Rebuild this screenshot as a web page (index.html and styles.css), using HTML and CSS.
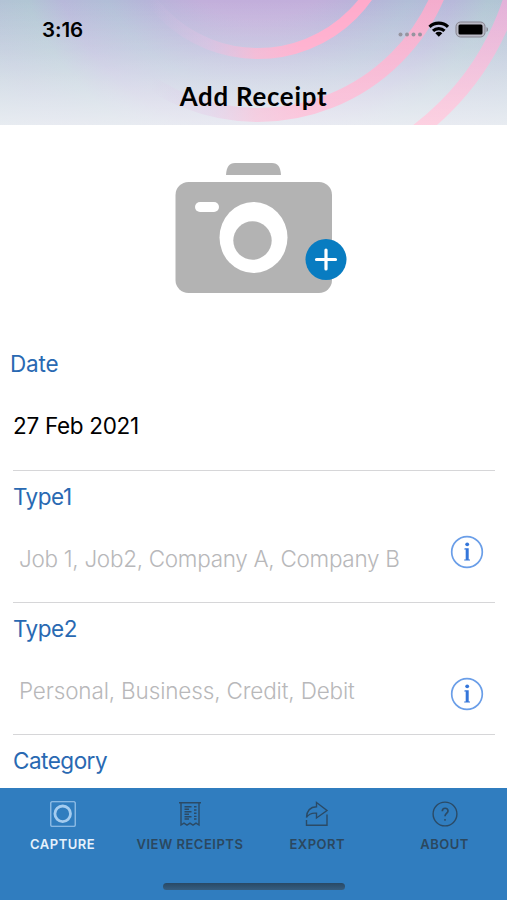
FILE: index.html
```html
<!DOCTYPE html>
<html lang="en">

<head>
    <meta charset="UTF-8">
    <meta name="viewport" content="width=device-width, initial-scale=1.0">
    <title>Add Receipt</title>
    <link rel="stylesheet" href="styles.css">
</head>

<body>
    <div class="header">
        <svg class="rings" width="507" height="125" viewBox="0 0 507 125">
            <defs>
                <linearGradient id="pink" gradientUnits="userSpaceOnUse" x1="150" y1="0" x2="300" y2="0">
                    <stop offset="0" stop-color="#d0bbe2" stop-opacity="0" />
                    <stop offset="0.4" stop-color="#dcbce0" stop-opacity="0.6" />
                    <stop offset="0.7" stop-color="#f6b2d0" stop-opacity="0.9" />
                    <stop offset="1" stop-color="#ffaacb" />
                </linearGradient>
                <linearGradient id="pink3" gradientUnits="userSpaceOnUse" x1="0" y1="0" x2="0" y2="125">
                    <stop offset="0" stop-color="#e8b0da" />
                    <stop offset="1" stop-color="#ffb9d2" />
                </linearGradient>
                <radialGradient id="glow" gradientUnits="userSpaceOnUse" cx="258" cy="-80" r="330">
                    <stop offset="0" stop-color="#c2aadc" />
                    <stop offset="0.3" stop-color="#c2afdb" />
                    <stop offset="0.42" stop-color="#b6b5d9" />
                    <stop offset="0.52" stop-color="#b1bed7" />
                    <stop offset="0.64" stop-color="#b7b8da" />
                    <stop offset="0.74" stop-color="#b1c6d4" />
                    <stop offset="0.86" stop-color="#b3c1d6" />
                    <stop offset="1" stop-color="#b0c8d3" />
                </radialGradient>
                <linearGradient id="fade" x1="0" y1="0" x2="0" y2="1">
                    <stop offset="0" stop-color="#e9ebf1" stop-opacity="0" />
                    <stop offset="0.4" stop-color="#e9ebf1" stop-opacity="0.25" />
                    <stop offset="1" stop-color="#e9ebf1" stop-opacity="0.8" />
                </linearGradient>
                <linearGradient id="fadeRings" x1="0" y1="0" x2="0" y2="1">
                    <stop offset="0" stop-color="#fff" stop-opacity="0" />
                    <stop offset="1" stop-color="#fff" stop-opacity="0.3" />
                </linearGradient>
            </defs>
            <rect width="507" height="125" fill="url(#glow)" />
            <rect width="507" height="125" fill="url(#fade)" />
            <g fill="none">
                <circle cx="258" cy="-80.5" r="134" stroke="url(#pink)" stroke-width="11" />
                <circle cx="258" cy="-80.5" r="195.500" stroke="url(#pink)" stroke-width="14" opacity="0.85" />
                <circle cx="258" cy="-80.5" r="265" stroke="url(#pink3)" stroke-width="15" opacity="0.9" class="outer" />
            </g>
            <rect width="507" height="125" fill="url(#fadeRings)" />
        </svg>
        <div class="status">
            <span class="time">3:16</span>
            <svg class="signal" width="92" height="20" viewBox="0 0 92 20">
                <g fill="#96949f">
                    <circle cx="2.500" cy="14.500" r="2" />
                    <circle cx="9" cy="14.500" r="2" />
                    <circle cx="15.500" cy="14.500" r="2" />
                    <circle cx="22" cy="14.500" r="2" />
                </g>
                <g fill="none" stroke="#000" stroke-width="3.200">
                    <path d="M31.500 6.800a13.500 13.500 0 0 1 18.500 0" />
                    <path d="M35 10.900a8.500 8.500 0 0 1 11.500 0" />
                </g>
                <path d="M37.300 13.200a5 5 0 0 1 7 0L40.800 16.700z" />
                <rect x="58" y="2" width="29" height="15" rx="4.500" fill="#b9b9c5" stroke="#85838f" stroke-width="1" />
                <rect x="60.500" y="4.500" width="24" height="10" rx="1.500" />
                <path d="M88.500 7v5c2-.8 2-4.200 0-5z" fill="#85838f" />
            </svg>
        </div>
        <h1>Add Receipt</h1>
    </div>

    <div class="content">
        <div class="photo">
            <svg width="174" height="132" viewBox="0 0 174 132">
                <path d="M51 12c.5-8 3-12 9-12h37c6 0 8.500 4 9 12z" fill="#b3b3b3" />
                <rect x="0.500" y="19" width="156.500" height="111" rx="13" fill="#b3b3b3" />
                <rect x="20" y="39" width="24" height="10" rx="5" fill="#fff" />
                <ellipse cx="78.500" cy="74.500" rx="34" ry="35.500" fill="#fff" />
                <circle cx="77.500" cy="77.500" r="19.200" fill="#b3b3b3" />
                <circle cx="151" cy="96.500" r="20.500" fill="#087cc1" />
                <path d="M151 87v19M141.500 96.500h19" stroke="#fff" stroke-width="3.200" stroke-linecap="round" />
            </svg>
        </div>
        <div class="field date">
            <label>Date</label>
            <div class="row">
                <span class="value">27 Feb 2021</span>
            </div>
        </div>
        <div class="field">
            <label>Type1</label>
            <div class="row">
                <span class="hint">Job 1, Job2, Company A, Company B</span>
                <svg class="info" width="34" height="34" viewBox="0 0 34 34">
                    <circle cx="17" cy="17" r="15.300" />
                    <path d="M14.700 13.200h4v11.200h1.300v1.200h-5.800v-1.200h1.500v-9.800h-1.500z" />
                    <circle class="dot" cx="17.200" cy="9.300" r="1.900" />
                </svg>
            </div>
        </div>
        <div class="field">
            <label>Type2</label>
            <div class="row low">
                <span class="hint personal">Personal, Business, Credit, Debit</span>
                <svg class="info" width="34" height="34" viewBox="0 0 34 34">
                    <circle cx="17" cy="17" r="15.300" />
                    <path d="M14.700 13.200h4v11.200h1.300v1.200h-5.800v-1.200h1.500v-9.800h-1.500z" />
                    <circle class="dot" cx="17.200" cy="9.300" r="1.900" />
                </svg>
            </div>
        </div>
        <div class="field last">
            <label>Category</label>
        </div>
    </div>

    <div class="nav">
        <ul class="tabs">
            <li class="active">
                <svg width="26" height="26" viewBox="0 0 26 26">
                    <rect x="0.800" y="0.800" width="24.400" height="24.400" rx="1" stroke-width="1.100" />
                    <circle cx="12.700" cy="12.800" r="7.800" stroke-width="2.800" />
                </svg>
                <span>CAPTURE</span>
            </li>
            <li>
                <svg width="26" height="26" viewBox="0 0 26 26">
                    <path d="M2 1.800h22M4 2v22l3-1.800 3 2 3-2 3 2 3-2 3 1.800V2" />
                    <path d="M7.500 5.800h7M7.500 8.300h4.500M7.500 10.800h7M7.500 13.300h4.500M7.500 15.800h7M7.500 18h4.500M17 5.800h2.500M17 9h2.500M17 12.200h2.500M17 15.400h2.500M17 18h2.500" />
                </svg>
                <span>VIEW RECEIPTS</span>
            </li>
            <li>
                <svg width="26" height="26" viewBox="0 0 26 26">
                    <path d="M12.500 1.500l10.500 8-10.500 7.500v-4.800C7 11.700 4 14 2.500 16.500 2.800 10 6.500 6 12.500 5.800z" />
                    <path d="M2.500 19v5.300H23V13.500" />
                </svg>
                <span>EXPORT</span>
            </li>
            <li>
                <svg width="26" height="26" viewBox="0 0 26 26">
                    <circle cx="13" cy="13" r="11.900" />
                    <path d="M10.300 10.300c0-4 5.700-4 5.700-.3 0 2.400-3 2.600-3 5.200" stroke-width="1.700" />
                    <path d="M13 18v1.700" stroke-width="1.500" />
                </svg>
                <span>ABOUT</span>
            </li>
        </ul>
        <div class="home"></div>
    </div>
</body>

</html>
```
FILE: styles.css
```css
* {
    margin: 0;
    padding: 0;
    box-sizing: border-box;
    list-style: none;
}

body {
    width: 507px;
    height: 900px;
    display: flex;
    flex-direction: column;
    overflow: hidden;
    background: #fff;
    font-family: Inter, "Liberation Sans", sans-serif;
}

svg {
    display: block;
    flex-shrink: 0;
}

.header {
    height: 125px;
    position: relative;
    flex-shrink: 0;
}

/* sits behind the status bar and title */
.rings {
    position: absolute;
    z-index: -1;
}

.outer {
    clip-path: inset(0 0 0 50%);
}

.status {
    display: flex;
    justify-content: space-between;
    padding: 20px 17px 0 42px;
    height: 80px;
}

.time {
    font-size: 20.5px;
    line-height: 20px;
    font-weight: 600;
    letter-spacing: -0.1px;
}

h1 {
    font-family: Lato, sans-serif;
    font-size: 25.8px;
    line-height: 32px;
    font-weight: 700;
    letter-spacing: 0.75px;
    text-align: center;
}

.content {
    height: 663px;
    display: flex;
    flex-direction: column;
    overflow: hidden;
    flex-shrink: 0;
}

.photo {
    height: 213px;
    padding: 38px 0 0 175px;
    flex-shrink: 0;
}

.field {
    height: 132px;
    margin: 0 12px 0 13px;
    border-bottom: 1px solid #d6d6d8;
    flex-shrink: 0;
    white-space: nowrap;
}

.field.date {
    height: 133px;
}

.field.last {
    border: 0;
}

label {
    display: block;
    padding-top: 10px;
    font-size: 22.5px;
    line-height: 31px;
    color: #2969b2;
    letter-spacing: -0.5px;
}

.date label {
    margin-left: -3px;
    padding-top: 11px;
    line-height: 30px;
    letter-spacing: -0.2px;
}

.row {
    display: flex;
    justify-content: space-between;
    padding: 23px 11px 0 0;
}

.date .row {
    padding-top: 24px;
}

.value {
    padding-top: 8px;
    font-size: 22.5px;
    line-height: 30px;
    letter-spacing: -0.3px;
}

.hint {
    padding: 8px 0 0 6px;
    font-size: 22.5px;
    line-height: 31px;
    font-weight: 300;
    letter-spacing: -0.3px;
    color: #b8b8ba;
}

.personal {
    letter-spacing: -0.15px;
}

.info {
    fill: none;
    stroke: #6a9ee8;
    stroke-width: 1.7;
}

.info path,
.info .dot {
    fill: #3476da;
    stroke: none;
}

.low .info {
    margin-top: 10px;
}

.nav {
    height: 112px;
    background: #307dbf;
    display: flex;
    flex-direction: column;
    align-items: center;
}

.tabs {
    display: grid;
    grid-template-columns: repeat(4, 127.3px);
    width: 509px;
    height: 95px;
    padding-top: 13px;
    flex-shrink: 0;
    color: #2b485f;
}

.tabs li {
    display: flex;
    flex-direction: column;
    align-items: center;
    gap: 8px;
    font-size: 13px;
    line-height: 19px;
    font-weight: 600;
    letter-spacing: 0.5px;
    white-space: nowrap;
}

.tabs svg {
    fill: none;
    stroke: #2b4a65;
    stroke-width: 1.4;
}

.tabs .active {
    color: #e6f1fb;
}

.tabs .active svg {
    stroke: #a5ccef;
}

.home {
    width: 182px;
    height: 7px;
    border-radius: 4px;
    background: linear-gradient(#294965, #355d80);
}
```
